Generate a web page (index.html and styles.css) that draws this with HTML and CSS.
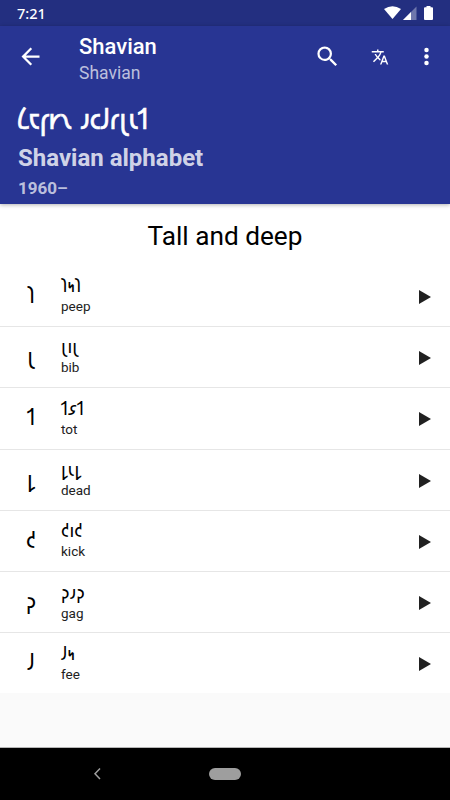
FILE: index.html
```html
<!DOCTYPE html>
<html lang="en">
<head>
    <meta charset="UTF-8">
    <meta name="viewport" content="width=device-width, initial-scale=1.0">
    <title>Shavian</title>
    <link rel="stylesheet" href="styles.css">
</head>
<body>

<div class="screen">
    <div class="status-bar">
        <span class="clock">7:21</span>
        <svg class="status-icons" width="50" height="16" viewBox="0 0 50 16">
            <path d="M0 4Q8.5 -1.500 17 4L8.500 14Z" fill="#fff"/>
            <path d="M32.500 1.500V15H19Z" fill="#fff" opacity=".35"/>
            <path d="M27 7V15H19Z" fill="#fff"/>
            <path d="M41 2.300h1.500V1h4v1.300H48a1 1 0 0 1 1 1V14a1 1 0 0 1-1 1h-7a1 1 0 0 1-1-1V3.300a1 1 0 0 1 1-1Z" fill="#fff"/>
        </svg>
    </div>

    <header class="header">
        <div class="toolbar">
            <svg class="back" width="27" height="27" viewBox="0 0 24 24" fill="#fff">
                <path d="M20 11H7.830l5.590-5.590L12 4l-8 8 8 8 1.410-1.410L7.830 13H20v-2z"/>
            </svg>
            <div class="titles">
                <div class="title">Shavian</div>
                <div class="subtitle">Shavian</div>
            </div>
            <svg class="search" width="27" height="27" viewBox="0 0 24 24" fill="#fff">
                <path d="M15.500 14h-.790l-.280-.270A6.471 6.471 0 0 0 16 9.500 6.500 6.500 0 1 0 9.500 16c1.610 0 3.090-.590 4.230-1.570l.270.280v.790l5 4.990L20.490 19l-4.990-5zm-6 0C7.010 14 5 11.990 5 9.500S7.010 5 9.500 5 14 7.010 14 9.500 11.990 14 9.500 14z"/>
            </svg>
            <svg class="translate" width="18" height="18" viewBox="0 0 24 24" fill="#fff">
                <path d="M12.870 15.070l-2.540-2.510.030-.030A17.520 17.520 0 0 0 14.070 6H17V4h-7V2H8v2H1v1.990h11.170C11.500 7.920 10.440 9.750 9 11.350 8.070 10.320 7.300 9.190 6.690 8h-2c.730 1.630 1.730 3.170 2.980 4.560l-5.090 5.020L4 19l5-5 3.110 3.110.760-2.040zM18.500 10h-2L12 22h2l1.120-3h4.750L21 22h2l-4.500-12zm-2.620 7l1.620-4.330L19.120 17h-3.240z"/>
            </svg>
            <svg class="more" width="27" height="27" viewBox="0 0 24 24" fill="#fff">
                <circle cx="12" cy="6.200" r="2"/>
                <circle cx="12" cy="12" r="2"/>
                <circle cx="12" cy="17.800" r="2"/>
            </svg>
        </div>
        <div class="native-name">𐑖𐑱𐑝𐑾𐑯 𐑨𐑤𐑓𐑩𐑚𐑧𐑑</div>
        <div class="script-name">Shavian alphabet</div>
        <div class="years">1960–</div>
    </header>

    <main class="content">
        <h1>Tall and deep</h1>
        <div class="row">
            <span class="letter">𐑐</span>
            <div class="words"><div class="word">𐑐𐑰𐑐</div><div class="latin">peep</div></div>
            <span class="play"></span>
        </div>
        <div class="row">
            <span class="letter">𐑚</span>
            <div class="words"><div class="word">𐑚𐑦𐑚</div><div class="latin">bib</div></div>
            <span class="play"></span>
        </div>
        <div class="row">
            <span class="letter">𐑑</span>
            <div class="words"><div class="word">𐑑𐑭𐑑</div><div class="latin">tot</div></div>
            <span class="play"></span>
        </div>
        <div class="row">
            <span class="letter">𐑛</span>
            <div class="words"><div class="word">𐑛𐑧𐑛</div><div class="latin">dead</div></div>
            <span class="play"></span>
        </div>
        <div class="row">
            <span class="letter">𐑒</span>
            <div class="words"><div class="word">𐑒𐑦𐑒</div><div class="latin">kick</div></div>
            <span class="play"></span>
        </div>
        <div class="row">
            <span class="letter">𐑜</span>
            <div class="words"><div class="word">𐑜𐑨𐑜</div><div class="latin">gag</div></div>
            <span class="play"></span>
        </div>
        <div class="row">
            <span class="letter">𐑓</span>
            <div class="words"><div class="word">𐑓𐑰</div><div class="latin">fee</div></div>
            <span class="play"></span>
        </div>
    </main>

    <div class="nav-bar">
        <svg width="10" height="14" viewBox="0 0 10 14" fill="none" stroke="#9e9e9e" stroke-width="1.500">
            <path d="M7 1.500L2 6.700L7 12"/>
        </svg>
        <span class="home-pill"></span>
    </div>
</div>

</body>
</html>
```
FILE: styles.css
```css
body {
    margin: 0;
    font-family: Roboto, "Noto Sans Shavian", "Noto Sans", sans-serif;
    color: #212121;
}
.screen {
    width: 450px;
    height: 800px;
    display: flex;
    flex-direction: column;
    background-color: #fafafa;
    overflow: hidden;
}
.status-bar {
    box-sizing: border-box;
    height: 26px;
    flex: none;
    padding: 0 16px 0 17px;
    display: flex;
    align-items: center;
    justify-content: space-between;
    background-color: #232f80;
    color: white;
}
.clock {
    font-family: "Noto Sans", sans-serif;
    font-size: 14.5px;
    font-weight: 500;
}
.header {
    box-sizing: border-box;
    height: 178px;
    flex: none;
    background-color: #283593;
    color: white;
    box-shadow: 0 1px 4px rgba(0, 0, 0, 0.3);
    z-index: 1;
}
.toolbar {
    height: 61px;
    display: flex;
    align-items: center;
    padding: 0 10px 0 17px;
}
.titles {
    flex: 1;
    padding: 4px 0 0 35px;
}
.title {
    font-size: 22px;
    line-height: 28px;
    font-weight: 500;
}
.subtitle {
    font-size: 17.5px;
    line-height: 24px;
    color: rgba(255, 255, 255, 0.7);
}
.translate {
    margin: 0 24px 0 30px;
}
.native-name {
    padding-left: 17px;
    height: 57px;
    line-height: 66px;
    font-size: 27px;
    letter-spacing: -0.5px;
    word-spacing: 2px;
    -webkit-text-stroke: 0.6px white;
}
.script-name {
    padding-left: 18px;
    font-size: 24px;
    line-height: 28px;
    font-weight: 700;
    color: rgba(255, 255, 255, 0.8);
}
.years {
    padding-left: 18px;
    font-size: 17px;
    line-height: 32px;
    font-weight: 700;
    color: rgba(255, 255, 255, 0.7);
}
.content {
    flex: none;
    background-color: white;
}
h1 {
    margin: 0;
    height: 61px;
    line-height: 65px;
    font-size: 26.2px;
    font-weight: 400;
    text-align: center;
    color: black;
}
.row {
    box-sizing: border-box;
    height: 61.3px;
    display: flex;
    align-items: center;
    padding: 0 19px 0 0;
    border-bottom: 1px solid #e6e6e6;
}
.row:first-of-type {
    height: 62px;
}
.row:last-child {
    height: 60px;
    border-bottom: none;
}
.letter {
    width: 60px;
    padding-left: 1px;
    text-align: center;
    font-size: 21.5px;
    line-height: 30px;
    color: black;
}
.words {
    flex: 1;
    padding-bottom: 1.5px;
}
.word {
    font-size: 18px;
    line-height: 22px;
    height: 22px;
    color: black;
}
.latin {
    font-size: 13.5px;
    line-height: 18px;
}
.play {
    margin-top: 2px;
    border-left: 12px solid #212121;
    border-top: 7.5px solid transparent;
    border-bottom: 7.5px solid transparent;
}
.nav-bar {
    height: 52px;
    flex: none;
    margin-top: auto;
    display: flex;
    align-items: center;
    padding-left: 93px;
    background-color: black;
    border-top: 1px solid #b5b5b5;
}
.home-pill {
    width: 32px;
    height: 12px;
    margin-left: 106px;
    border-radius: 6px;
    background-color: #9e9e9e;
}
```
